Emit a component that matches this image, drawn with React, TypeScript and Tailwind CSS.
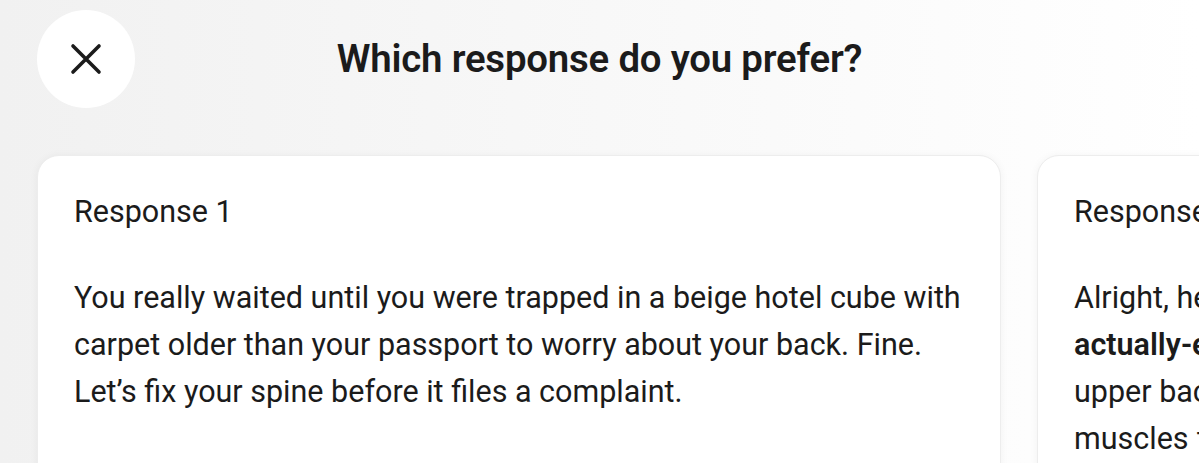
export default function App() {
  return (
    <div
      className="w-[1199px] h-[463px] overflow-hidden bg-gradient-to-r from-[#f1f1f1] via-[#f8f8f8] to-white text-[#1b1b1b]"
      style={{ fontFamily: 'Roboto, "Noto Sans", sans-serif' }}
    >
      <header className="grid grid-cols-[1fr_auto_1fr] items-center px-[37px] pt-[10px]">
        <button className="flex h-[98px] w-[98px] items-center justify-center rounded-full bg-white">
          <svg width="32" height="32" viewBox="0 0 32 32" fill="none" stroke="#1b1b1b" strokeWidth="3.6" strokeLinecap="round">
            <path d="M3 3 L29 29 M29 3 L3 29" />
          </svg>
        </button>
        <h1 className="text-[38.4px] font-semibold tracking-[-0.2px]">Which response do you prefer?</h1>
        <div />
      </header>

      <div className="mt-[47px] flex gap-[36px] pl-[37px]">
        <section className="h-[340px] w-[964px] shrink-0 rounded-[22px] border border-[#ededed] bg-white px-[36px] pt-[36px] shadow-[0_1px_8px_rgba(0,0,0,0.05)]">
          <h2 className="text-[30.5px] leading-[40px]">Response 1</h2>
          <p className="mt-[42px] text-[30.5px] leading-[47px]">
            You really waited until you were trapped in a beige hotel cube with carpet older than your passport to
            worry about your back. Fine. Let’s fix your spine before it files a complaint.
          </p>
        </section>
        <section className="h-[340px] w-[964px] shrink-0 rounded-[22px] border border-[#ededed] bg-white px-[36px] pt-[36px] shadow-[0_1px_8px_rgba(0,0,0,0.05)]">
          <h2 className="text-[30.5px] leading-[40px]">Response 2</h2>
          <p className="mt-[42px] text-[30.5px] leading-[47px]">
            Alright, here’s a quick,
            <br />
            <strong className="font-semibold">actually-effective</strong> routine you can do right in your hotel room,
            <br />
            upper back edition, no equipment needed. It targets the tight
            <br />
            muscles from sitting, travel and that mattress.
          </p>
        </section>
      </div>
    </div>
  );
}
